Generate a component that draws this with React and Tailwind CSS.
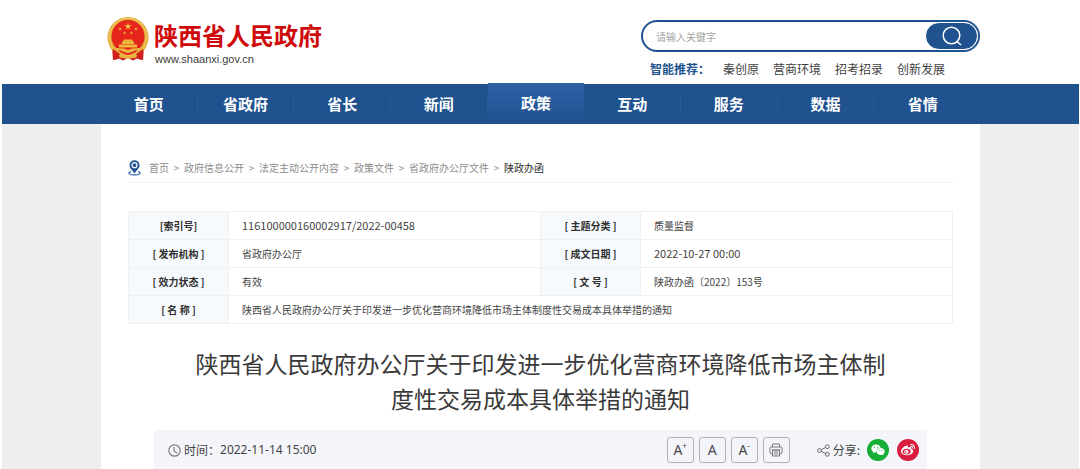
import React, { useState } from "react";
import { FaWeibo, FaWeixin } from "react-icons/fa";

const navItems = ["首页", "省政府", "省长", "新闻", "政策", "互动", "服务", "数据", "省情"];

const hotWords = ["秦创原", "营商环境", "招考招录", "创新发展"];

const crumbs = ["首页", "政府信息公开", "法定主动公开内容", "政策文件", "省政府办公厅文件"];

const rows = [
  ["[索引号]", "116100000160002917/2022-00458", "[ 主题分类 ]", "质量监督"],
  ["[ 发布机构 ]", "省政府办公厅", "[ 成文日期 ]", "2022-10-27 00:00"],
  ["[ 效力状态 ]", "有效", "[ 文 号 ]", "陕政办函〔2022〕153号"],
];

const title =
  "陕西省人民政府办公厅关于印发进一步优化营商环境降低市场主体制度性交易成本具体举措的通知";

const starPath =
  "M0 -1 L0.235 -0.324 L0.951 -0.309 L0.38 0.124 L0.588 0.809 L0 0.4 L-0.588 0.809 L-0.38 0.124 L-0.951 -0.309 L-0.235 -0.324 Z";

const Emblem = () => (
  <svg className="h-[46px] w-[42px] shrink-0" viewBox="0 0 42 46" aria-hidden="true">
    <path d="M5 31 L6 44 L12 42.500 L16 44.500 L21 42 L26 44.500 L30 42.500 L36 44 L37 31 Z" fill="#d2201a" />
    <ellipse cx="21" cy="21.500" rx="20.500" ry="20.500" fill="#e0aa3c" />
    <circle cx="21" cy="21" r="18.500" fill="none" stroke="#efc458" strokeWidth="1.500" />
    <circle cx="21" cy="20.500" r="16.500" fill="#e6251c" />
    <g fill="#f0b93c">
      <path d={starPath} transform="translate(21 10.500) scale(4)" />
      <path d={starPath} transform="translate(13 13) scale(2)" />
      <path d={starPath} transform="translate(29 13) scale(2)" />
      <path d={starPath} transform="translate(17.500 17) scale(1.800)" />
      <path d={starPath} transform="translate(24.500 17) scale(1.800)" />
      <path d="M15.500 26 L17 23.500 H25 L26.500 26 Z" />
      <rect x="15" y="26" width="12" height="2" />
      <path d="M12 28.500 H30 V31.500 H12 Z" />
    </g>
    <path d="M6 31 C11 33 14 31 21 34 C28 31 31 33 36 31 L36 33 L31 38 H11 L6 33 Z" fill="#e8b640" />
    <path d="M11 34 C15 34 17 37 21 37 C25 37 27 34 31 34 L29 36 C26 37 24 39 21 39 C18 39 16 37 13 36 Z" fill="#e6251c" />
    <path d="M6 33 L13 38 L11 43 L6 44 Z M36 33 L29 38 L31 43 L36 44 Z" fill="#d2201a" />
    <path d="M12 39 C16 37 17 40 21 40 C25 40 26 37 30 39 L29 42 C26 41 24 43 21 43 C18 43 16 41 13 42 Z" fill="#e8b640" />
  </svg>
);

const PinIcon = () => (
  <svg className="h-4 w-[13px] shrink-0" viewBox="0 0 13 16" fill="none" aria-hidden="true">
    <path d="M3 11.500 C-1 13 1 15 6.500 15 C12 15 14 13 10 11.500" stroke="#5c82b5" strokeWidth="1.400" />
    <path
      d="M6.500 0.200 A5 5 0 0 1 11.500 5.200 C11.500 8.700 8 10.500 6.500 13.500 C5 10.500 1.500 8.700 1.500 5.200 A5 5 0 0 1 6.500 0.200 Z"
      fill="#20528f"
    />
    <circle cx="6.500" cy="5.200" r="2.500" fill="#20528f" stroke="#fff" strokeWidth="1.200" />
  </svg>
);

const ClockIcon = () => (
  <svg className="size-[13px] shrink-0" viewBox="0 0 13 13" fill="none" stroke="#808084" aria-hidden="true">
    <circle cx="6.500" cy="6.500" r="5.700" strokeWidth="1.200" />
    <path d="M6 3 V7 L9 9" strokeWidth="1.200" />
  </svg>
);

const PrintIcon = () => (
  <svg className="size-[14px]" viewBox="0 0 14 14" fill="none" stroke="#77777b" aria-hidden="true">
    <path d="M3.500 4 V1 H10.500 V4" />
    <path d="M3 10.500 H2 Q1 10.500 1 9.500 V5 Q1 4 2 4 H12 Q13 4 13 5 V9.500 Q13 10.500 12 10.500 H11" />
    <path d="M3 7 H11" strokeWidth="1.400" />
    <path d="M3.500 7 V13 H10.500 V7 M5 9 H9 M5 11 H9" />
  </svg>
);

const ShareIcon = () => (
  <svg className="h-[13px] w-[13px]" viewBox="0 0 13 13" fill="none" stroke="#66666a" aria-hidden="true">
    <circle cx="2.500" cy="6.500" r="1.900" />
    <circle cx="10.300" cy="2.700" r="1.900" />
    <circle cx="10.300" cy="10.300" r="1.900" />
    <path d="M4.300 5.700 L8.500 3.500 M4.300 7.300 L8.500 9.500" />
  </svg>
);

const toolBtn =
  "flex h-[26px] w-[27px] items-center justify-center rounded-[3px] border border-[#b2b2b6] font-['Noto_Sans',sans-serif] text-sm leading-none text-[#4a4a4e]";

const Header = () => {
  const [keyword, setKeyword] = useState("");

  return (
    <header className="mx-auto flex h-[84px] max-w-[879px] justify-between">
      <a href="#" className="flex items-start gap-[5px] pt-4 pl-[6px]">
        <Emblem />
        <span className="flex flex-col pt-[1px]">
          <span className="text-2xl leading-9 font-bold text-[#cf0a0a]">陕西省人民政府</span>
          <span className="pl-[1px] font-['Liberation_Sans',sans-serif] text-[11px] leading-3 text-[#3c3c3c]">
            www.shaanxi.gov.cn
          </span>
        </span>
      </a>
      <div className="w-[339px] pt-5">
        <form
          className="flex h-8 items-center rounded-full border-2 border-[#20528f] pl-[13px]"
          onSubmit={(e) => e.preventDefault()}
        >
          <input
            type="text"
            aria-label="请输入关键字"
            placeholder="请输入关键字"
            value={keyword}
            onChange={(e) => setKeyword(e.target.value)}
            className="min-w-0 flex-1 text-[10px] outline-none placeholder:text-[#a3a3a3]"
          />
          <button
            type="submit"
            aria-label="搜索"
            className="flex h-[28px] w-[53px] items-center justify-center rounded-full border border-white bg-[#20528f]"
          >
            <svg className="size-5" viewBox="0 0 20 20" fill="none" stroke="#fff" strokeWidth="1.500" aria-hidden="true">
              <circle cx="9.500" cy="9.500" r="8.300" />
              <path d="M15 15.500 L19 19" />
            </svg>
          </button>
        </form>
        <div className="mt-[9px] flex items-center gap-[14px] pl-[9px] text-xs leading-4 text-[#3f3f3f]">
          <span className="w-[59px] font-bold whitespace-nowrap text-[#20528f]">智能推荐：</span>
          {hotWords.map((word) => (
            <a key={word} href="#">
              {word}
            </a>
          ))}
        </div>
      </div>
    </header>
  );
};

const Nav = () => (
  <nav className="bg-[#20528f]">
    <div className="mx-auto max-w-[879px] pr-[9px]">
      <ul className="grid h-10 grid-cols-9">
        {navItems.map((item, i) => (
          <li key={item}>
            {item === "政策" ? (
              <a
                href="#"
                aria-current="page"
                className="-mt-px flex h-[41px] items-center justify-center bg-linear-to-b from-[#2d61a6] to-[#20528f] text-[15px] font-bold text-white"
              >
                {item}
              </a>
            ) : (
              <a
                href="#"
                className="flex h-10 items-center text-[15px] font-bold text-white"
              >
                <span className="flex-1 text-center">{item}</span>
                {i < navItems.length - 1 && <span className="h-[14px] w-px bg-[#2d5d97]"></span>}
              </a>
            )}
          </li>
        ))}
      </ul>
    </div>
  </nav>
);

const Breadcrumb = () => (
  <div className="flex h-[30px] items-center gap-2 border-b border-[#f3f3f3] text-[10px] text-[#8c8c8c]">
    <PinIcon />
    <div className="flex items-center">
      {crumbs.map((crumb) => (
        <React.Fragment key={crumb}>
          <a href="#">{crumb}</a>
          <span className="w-[15px] text-center">&gt;</span>
        </React.Fragment>
      ))}
      <a href="#" className="text-[#2b2b2b]">
        陕政办函
      </a>
    </div>
  </div>
);

const InfoTable = () => (
  <table className="mt-7 w-full table-fixed border-collapse text-[10px] text-[#444]">
    <colgroup>
      <col className="w-[100px]" />
      <col />
      <col className="w-[100px]" />
      <col />
    </colgroup>
    <tbody>
      {rows.map(([nameA, valueA, nameB, valueB]) => (
        <tr key={nameA} className="h-7">
          <th className="border border-[#f0f1f2] bg-[#f6fafd] text-[#2f2f2f]">{nameA}</th>
          <td className={/^\d/.test(valueA) ? "border border-[#f0f1f2] pl-[13px] text-[11px]" : "border border-[#f0f1f2] pl-[13px]"}>
            {valueA}
          </td>
          <th className="border border-[#f0f1f2] bg-[#f6fafd] text-[#2f2f2f]">{nameB}</th>
          <td className={/^\d/.test(valueB) ? "border border-[#f0f1f2] pl-[13px] text-[11px]" : "border border-[#f0f1f2] pl-[13px]"}>
            {valueB}
          </td>
        </tr>
      ))}
      <tr className="h-7">
        <th className="border border-[#f0f1f2] bg-[#f6fafd] text-[#2f2f2f]">[ 名 称 ]</th>
        <td colSpan={3} className="border border-[#f0f1f2] pl-[13px]">
          {title}
        </td>
      </tr>
    </tbody>
  </table>
);

const Toolbar = () => (
  <div className="mx-[26px] mt-[14px] flex items-center justify-between bg-[#f4f5fb] pt-[7px] pr-2 pb-[6px] pl-[14px] text-[#444]">
    <div className="flex items-center text-xs">
      <ClockIcon />
      <span className="ml-[3px]">时间：</span>
      <time className="font-['Noto_Sans',sans-serif]">2022-11-14 15:00</time>
    </div>
    <div className="flex items-center">
      <div className="flex gap-[5px]">
        <button type="button" className={toolBtn} aria-label="放大字号">
          A<sup className="text-[8px]">+</sup>
        </button>
        <button type="button" className={toolBtn} aria-label="默认字号">
          A
        </button>
        <button type="button" className={toolBtn} aria-label="缩小字号">
          A<sup className="text-[8px]">-</sup>
        </button>
        <button type="button" className={toolBtn} aria-label="打印">
          <PrintIcon />
        </button>
      </div>
      <div className="ml-[27px] flex items-center gap-[3px] text-xs">
        <ShareIcon />
        <span>分享:</span>
      </div>
      <div className="ml-[7px] flex gap-2">
        <a href="#" aria-label="微信" className="flex size-[22px] items-center justify-center rounded-full bg-[#16ae37] text-white">
          <FaWeixin className="size-[14px]" />
        </a>
        <a href="#" aria-label="微博" className="flex size-[22px] items-center justify-center rounded-full bg-[#d81e3c] text-white">
          <FaWeibo className="size-[14px]" />
        </a>
      </div>
    </div>
  </div>
);

const App = () => {
  return (
    <div className="bg-white pr-px pl-[2px] font-['Noto_Sans_CJK_SC',sans-serif]">
      <Header />
      <Nav />
      <div className="bg-[#eeeeee]">
        <main className="mx-auto max-w-[879px] bg-white px-[27px] pt-[29px]">
          <Breadcrumb />
          <InfoTable />
          <h1 className="mx-auto mt-[22px] max-w-[710px] text-center text-[23px] leading-[35px] text-[#3a3a3a]">
            {title}
          </h1>
          <Toolbar />
        </main>
      </div>
    </div>
  );
};

export default App;
